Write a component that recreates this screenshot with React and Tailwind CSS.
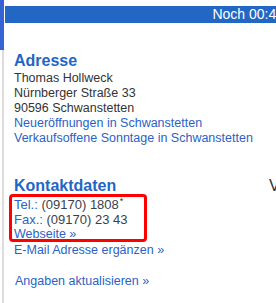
export default function App() {
    return (
        <div className="relative flex w-[276px] h-[303px] overflow-hidden bg-white font-['Liberation_Sans',Arial,sans-serif]">
            <div className="flex flex-col w-[4px] shrink-0">
                <div className="h-[50px] bg-[#3562d4]"></div>
                <div className="flex-1 border-r-2 border-[#dcdcdc]"></div>
            </div>

            <div className="flex-1 min-w-0 ml-[1px]">
                <div className="mt-[6px] h-[17px] bg-[#2167c3] flex justify-end overflow-hidden">
                    <span className="mr-[-8px] whitespace-nowrap text-[14px] leading-[17px] text-white">
                        Noch 00:44
                    </span>
                </div>

                <div className="pl-[9px] text-[12.5px] leading-[15px] text-[#333]">
                    <h2 className="mt-[28px] text-[16px] leading-[20px] font-bold text-[#1f66c7]">Adresse</h2>
                    <p>Thomas Hollweck</p>
                    <p>Nürnberger Straße 33</p>
                    <p>90596 Schwanstetten</p>
                    <a className="block text-[#2a62c6]">Neueröffnungen in Schwanstetten</a>
                    <a className="block text-[#2a62c6] whitespace-nowrap">Verkaufsoffene Sonntage in Schwanstetten</a>

                    <div className="mt-[30px] flex justify-between overflow-hidden">
                        <h2 className="text-[16px] leading-[20px] font-bold text-[#1f66c7]">Kontaktdaten</h2>
                        <span className="w-[7px] overflow-hidden text-[16px] leading-[20px] text-[#2b2f3a]">V</span>
                    </div>
                    <div className="mt-[1px] text-[#2a62c6]">
                        <p className="text-[13px]">
                            Tel.: <span className="text-[#3a3f4a]">(09170) 1808</span>
                            <span className="relative -top-[5px] ml-[1px] text-[9px] leading-none text-[#333]">*</span>
                        </p>
                        <p className="text-[13px]">
                            Fax.: <span className="text-[#3a3f4a]">(09170) 23 43</span>
                        </p>
                        <a className="block">Webseite »</a>
                        <a className="block mt-[1px]">E-Mail Adresse ergänzen »</a>
                        <a className="block mt-[16px] ml-[1px]">Angaben aktualisieren »</a>
                    </div>
                </div>
            </div>

            <div className="absolute left-[9px] top-[194px] w-[138px] h-[48px] border-[3px] border-[#ff0000] rounded-[4px]"></div>
        </div>
    )
}
